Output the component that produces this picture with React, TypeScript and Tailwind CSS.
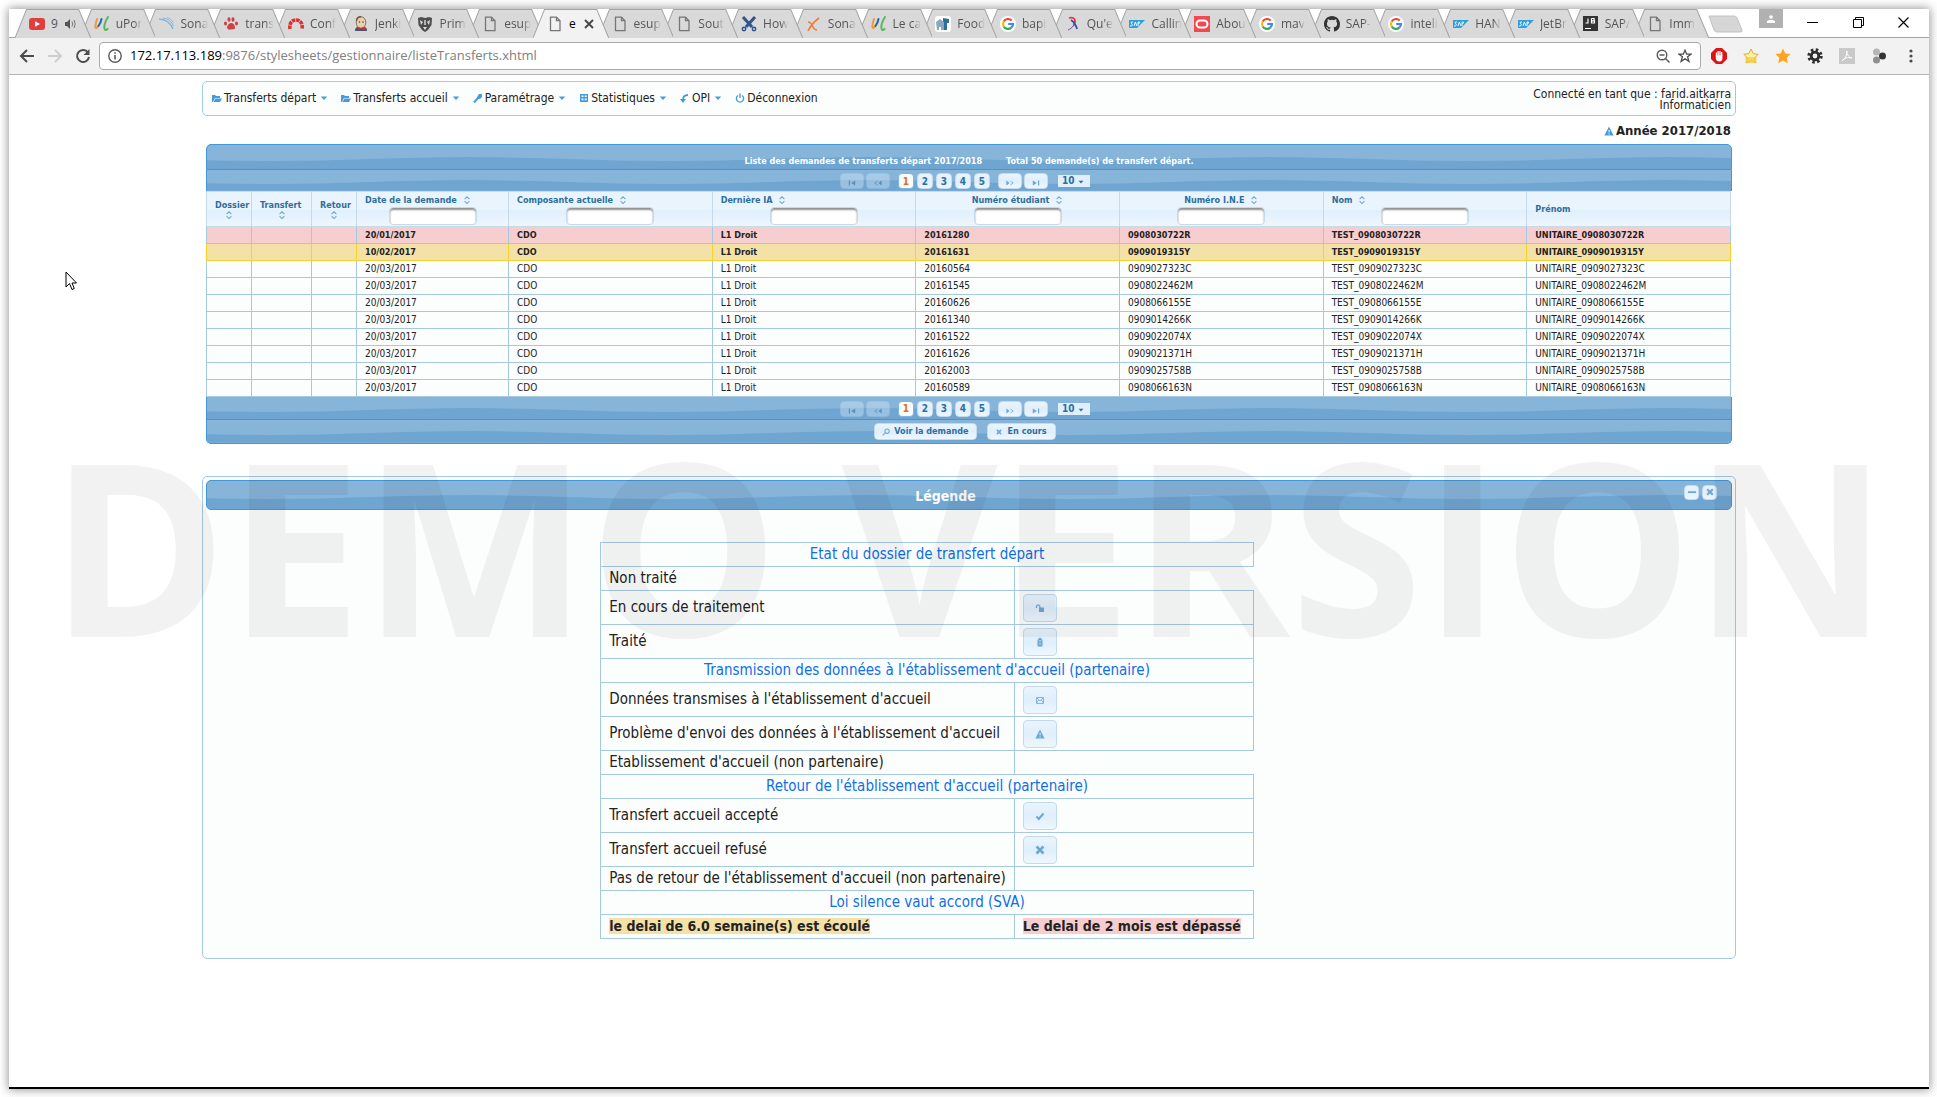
import React, { useId } from 'react';

/* ---------- favicons ---------- */

type FavName =
  | 'youtube' | 'uportal' | 'sonar' | 'paw' | 'arc' | 'jenkins' | 'prime' | 'doc'
  | 'scissors' | 'cross' | 'nautilus' | 'google' | 'parrot' | 'sap' | 'oracle' | 'github' | 'jetbrains';

function Favicon({ name }: { name: FavName }) {
  const box = { viewBox: '0 0 16 16', className: 'size-4 shrink-0', 'aria-hidden': true } as const;
  switch (name) {
    case 'youtube':
      return (
        <svg {...box}><rect y="2" width="16" height="12" rx="3" fill="#e0403d" /><path d="M6 5.2v5.6L11 8z" fill="#fff" /></svg>
      );
    case 'uportal':
      return (
        <svg {...box} fill="none" strokeWidth="2" strokeLinecap="round">
          <path d="M3 3C2 6 1 10 1.500 11.500s2 0 3-2" stroke="#f0983c" />
          <path d="M7.500 3C7 6 6 8 4.500 10" stroke="#2d68a8" />
          <path d="M14 1c-2.500 4-4 9-3.500 11.500s2 1.500 3 .5" stroke="#57b95b" />
        </svg>
      );
    case 'sonar':
      return (
        <svg {...box} fill="none" stroke="#7fb6df">
          <path d="M1 3c6 0 12 4 14 10" strokeWidth="1.400" /><path d="M5 2c5 .5 9 4 10.500 8" /><path d="M9 1.500c3 .8 5.500 3 6.500 5" strokeWidth=".8" />
        </svg>
      );
    case 'paw':
      return (
        <svg {...box} fill="#cf3f45">
          <path d="M8 7c-2 0-4 3-4 4.500S6 14 8 13.500s4 .5 4-2S10 7 8 7z" /><ellipse cx="2.500" cy="7.500" rx="1.500" ry="2" /><ellipse cx="6" cy="3.500" rx="1.500" ry="2.300" /><ellipse cx="10" cy="3.500" rx="1.500" ry="2.300" /><ellipse cx="13.500" cy="7.500" rx="1.500" ry="2" />
        </svg>
      );
    case 'arc':
      return (
        <svg {...box} fill="none"><path d="M2 13C1 7 4 4 8 4s7 3 6 9" stroke="#e0312f" strokeWidth="3.600" strokeDasharray="3.500 .7" /></svg>
      );
    case 'jenkins':
      return (
        <svg {...box}>
          <path d="M2 15c0-3 1-4 3-4h6c2 0 3 1 3 4z" fill="#47556b" /><ellipse cx="8" cy="6.500" rx="4.800" ry="5.800" fill="#eccfae" stroke="#6b5847" strokeWidth=".8" />
          <path d="M3.500 5C3.500 2 5 .8 8 .8" stroke="#6b5847" strokeWidth="1.400" fill="none" /><circle cx="6.500" cy="6" r=".7" fill="#333" /><circle cx="10" cy="6" r=".7" fill="#333" /><path d="M8 12l4-1.500v4zM8 12l-3-1v3z" fill="#c8353a" />
        </svg>
      );
    case 'prime':
      return (
        <svg {...box}>
          <path d="M1 2l3-1 4 1 4-1 3 1-.5 7L11 14l-3 2-3-2-3.500-5z" fill="#4d4d4d" /><path d="M3 4l3 2-2 3zM13 4l-3 2 2 3zM7.300 4h1.400v5H7.300zM6 11h4l-2 3z" fill="#ddd" />
        </svg>
      );
    case 'doc':
      return (
        <svg {...box} fill="none" stroke="#767676" strokeWidth="1.300"><path d="M3.500 1.200h6l3.500 3.500v10H3.500z" /><path d="M9.500 1.200v3.500H13" /></svg>
      );
    case 'scissors':
      return (
        <svg {...box} fill="none" stroke="#31548a" strokeWidth="3"><path d="M2 1l9 10M14 1L5 11" /><circle cx="3" cy="13" r="1.700" strokeWidth="1.500" /><circle cx="13" cy="13" r="1.700" strokeWidth="1.500" /></svg>
      );
    case 'cross':
      return (
        <svg {...box} fill="none" stroke="#ee7b3b" strokeWidth="1.600"><path d="M2 6c3 0 4 3 5 5s2 3 4 3M13 2C9 5 5 9 2 15" /></svg>
      );
    case 'nautilus':
      return (
        <svg {...box}><rect width="16" height="16" rx="3" fill="#fff" /><path d="M8 2l6 1v4h-2v7H8z" fill="#2c6e9b" /><path d="M1 6l4-3 4 3v8H6v-3H4v3H2z" fill="#8aa7bd" /></svg>
      );
    case 'google':
      return (
        <svg {...box}>
          <circle cx="8" cy="8" r="8" fill="#fff" />
          <g fill="none" strokeWidth="2.200"><path d="M11.700 4.600A5 5 0 003.700 5.500" stroke="#e94335" /><path d="M3.700 5.500a5 5 0 000 5" stroke="#fabb05" /><path d="M3.700 10.500a5 5 0 007.600 1.200" stroke="#34a853" /><path d="M11.300 11.700A5 5 0 0013 8H8.200" stroke="#4285f4" /></g>
        </svg>
      );
    case 'parrot':
      return (
        <svg {...box} fill="none" strokeWidth="1.800"><path d="M4 2c3-1 6 0 6 3S8 9 9 10" stroke="#d9383d" /><path d="M6 4c3 2 5 5 6 9" stroke="#3a4ea0" /><path d="M8 10c-1 2-3 3-5 4" stroke="#6b58a0" strokeWidth="1" /></svg>
      );
    case 'sap':
      return (
        <svg {...box}>
          <path d="M0 4h16l-8 8H0z" fill="#2f9fdc" />
          <path d="M4 6H2.500q-.9 1 .3 1.800T2.500 10H1M5 10l1.300-4L8 10M9 10V6h1.500q1 1.200-1.500 2" fill="none" stroke="#fff" strokeWidth=".9" />
        </svg>
      );
    case 'oracle':
      return (
        <svg {...box}><rect width="16" height="16" fill="#ef4a4f" /><rect x="2.500" y="4.500" width="11" height="7" rx="3.500" fill="none" stroke="#fff" strokeWidth="2" /></svg>
      );
    case 'github':
      return (
        <svg {...box}>
          <path fill="#333" d="M8 0C3.580 0 0 3.580 0 8c0 3.540 2.290 6.530 5.470 7.590.4.070.55-.17.55-.38 0-.19-.01-.82-.01-1.490-2.010.37-2.530-.49-2.690-.94-.09-.23-.48-.94-.82-1.130-.28-.15-.68-.52-.01-.53.63-.01 1.080.58 1.230.82.72 1.210 1.870.87 2.330.66.070-.52.28-.87.51-1.070-1.780-.2-3.640-.89-3.640-3.950 0-.87.31-1.590.82-2.150-.08-.2-.36-1.020.08-2.120 0 0 .67-.21 2.200.82a7.600 7.600 0 014 0c1.530-1.040 2.200-.82 2.200-.82.44 1.100.16 1.920.08 2.120.51.56.82 1.270.82 2.150 0 3.070-1.870 3.750-3.650 3.950.29.25.54.73.54 1.480 0 1.070-.01 1.930-.01 2.200 0 .21.15.46.55.38A8.010 8.010 0 0016 8c0-4.420-3.580-8-8-8z" />
        </svg>
      );
    default:
      return (
        <svg {...box}><rect width="15" height="15" fill="#333" /><path d="M2 12.500h6M5 2.500v4.500H2.500M8.500 2.500v4.500h3V4.800h-3M8.500 2.500h2.600v2.300" stroke="#fff" strokeWidth="1.200" fill="none" /></svg>
      );
  }
}

/* ---------- browser chrome ---------- */

const TABS: { icon: FavName; label: string; active?: boolean; audio?: boolean }[] = [
  { icon: 'youtube', label: '9', audio: true },
  { icon: 'uportal', label: 'uPor' },
  { icon: 'sonar', label: 'Sona' },
  { icon: 'paw', label: 'trans' },
  { icon: 'arc', label: 'Conf' },
  { icon: 'jenkins', label: 'Jenki' },
  { icon: 'prime', label: 'Prim' },
  { icon: 'doc', label: 'esup' },
  { icon: 'doc', label: 'e', active: true },
  { icon: 'doc', label: 'esup' },
  { icon: 'doc', label: 'Sout' },
  { icon: 'scissors', label: 'How' },
  { icon: 'cross', label: 'Sona' },
  { icon: 'uportal', label: 'Le ca' },
  { icon: 'nautilus', label: 'Food' },
  { icon: 'google', label: 'bapi' },
  { icon: 'parrot', label: "Qu'e" },
  { icon: 'sap', label: 'Callin' },
  { icon: 'oracle', label: 'Abou' },
  { icon: 'google', label: 'mav' },
  { icon: 'github', label: 'SAP-' },
  { icon: 'google', label: 'inteli' },
  { icon: 'sap', label: 'HAN' },
  { icon: 'sap', label: 'JetBr' },
  { icon: 'jetbrains', label: 'SAP/' },
  { icon: 'doc', label: 'Imm' },
];

function BrowserTab({ tab, index }: { tab: (typeof TABS)[number]; index: number }) {
  return (
    <li className="relative h-full min-w-0 flex-1" style={{ zIndex: tab.active ? 50 : 40 - index }}>
      <svg className="absolute inset-y-0 left-0 h-full w-[calc(100%+11px)]" viewBox="0 0 76 28" preserveAspectRatio="none" aria-hidden="true">
        <path d="M0 28L11.500 .5H64L76 28" fill={tab.active ? '#f2f2f2' : '#d9d9d9'} stroke="#a5a5a5" />
      </svg>
      <button type="button" className="relative flex h-full w-full items-center gap-1.5 pl-3.5 text-left text-xs text-[#555]">
        <Favicon name={tab.icon} />
        <span className={tab.active ? 'text-black' : tab.audio ? '' : 'whitespace-nowrap mask-r-from-70%'}>{tab.label}</span>
        {tab.audio && (
          <svg className="size-3 shrink-0" viewBox="0 0 12 12" aria-hidden="true"><path d="M1 4h2l3-3v10L3 8H1z" fill="#555" /><path d="M8 3.500q1.500 2.500 0 5M10 2q2.500 4 0 8" stroke="#777" fill="none" /></svg>
        )}
        {tab.active && (
          <svg className="ml-0.5 size-2.5 shrink-0" viewBox="0 0 10 10" aria-hidden="true"><path d="M1 1l8 8M9 1L1 9" stroke="#444" strokeWidth="1.800" /></svg>
        )}
      </button>
    </li>
  );
}

function BrowserChrome() {
  return (
    <header className="font-['Open_Sans',sans-serif]">
      <div className="flex h-[29px] items-start border-b border-[#a5a5a5] bg-white">
        <ul className="isolate ml-1.5 flex h-[29px] min-w-0 flex-1">
          {TABS.map((t, i) => <BrowserTab key={i} tab={t} index={i} />)}
        </ul>
        <button type="button" aria-label="Nouvel onglet" className="mt-1.5 ml-2.5">
          <svg className="h-[18px] w-[35px]" viewBox="0 0 35 18" aria-hidden="true"><path d="M1 1h25q2 0 3 2l5 12q1 2-2 2H9q-2 0-3-2z" fill="#d6d6d6" stroke="#c2c2c2" /></svg>
        </button>
        <button type="button" aria-label="Profil" className="ml-4 flex h-[19px] w-6 items-center justify-center bg-[#b1b1b1]">
          <svg className="size-2" viewBox="0 0 8 8" aria-hidden="true"><circle cx="4" cy="2" r="1.800" fill="#fff" /><path d="M0 8V6q4-2.500 8 0v2z" fill="#fff" /></svg>
        </button>
        <div className="flex h-[26px] w-[146px] items-center justify-between pr-5 pl-6">
          <button type="button" aria-label="Réduire"><svg className="size-[11px]" viewBox="0 0 11 11" aria-hidden="true"><path d="M0 5.500h11" stroke="#000" /></svg></button>
          <button type="button" aria-label="Restaurer"><svg className="size-[11px]" viewBox="0 0 11 11" aria-hidden="true"><path d="M.5 2.500h8v8h-8zM2.500 2.500v-2h8v8h-2" stroke="#000" fill="none" /></svg></button>
          <button type="button" aria-label="Fermer"><svg className="size-[11px]" viewBox="0 0 11 11" aria-hidden="true"><path d="M.5 .5l10 10M10.500 .5l-10 10" stroke="#000" strokeWidth="1.200" /></svg></button>
        </div>
      </div>
      <div className="flex h-[37px] items-center border-b border-[#b4b4b4] bg-[#f2f2f2] pl-2.5">
        <button type="button" aria-label="Précédent"><svg className="size-4" viewBox="0 0 16 16" aria-hidden="true"><path d="M15 8H2M8 2L2 8l6 6" fill="none" stroke="#4c4c4c" strokeWidth="2" /></svg></button>
        <button type="button" aria-label="Suivant" className="ml-3"><svg className="size-4" viewBox="0 0 16 16" aria-hidden="true"><path d="M1 8h13M8 2l6 6-6 6" fill="none" stroke="#cfcfcf" strokeWidth="2" /></svg></button>
        <button type="button" aria-label="Actualiser" className="ml-3"><svg className="size-4" viewBox="0 0 16 16" aria-hidden="true"><path d="M13 4.500A6 6 0 1014 9" fill="none" stroke="#4c4c4c" strokeWidth="2" /><path d="M14.500 1v6h-6z" fill="#4c4c4c" /></svg></button>
        <div className="ml-2 flex h-7 flex-1 items-center rounded-sm border border-[#a9a9a9] bg-white pr-2 pl-2">
          <svg className="size-3.5" viewBox="0 0 14 14" aria-hidden="true"><circle cx="7" cy="7" r="6.200" fill="none" stroke="#5a5a5a" strokeWidth="1.400" /><path d="M7 6v4.500M7 3.200v1.600" stroke="#5a5a5a" strokeWidth="1.600" /></svg>
          <p className="ml-2 flex-1 text-[13px] whitespace-nowrap text-[#808080]"><span className="text-black">172.17.113.189</span>:9876/stylesheets/gestionnaire/listeTransferts.xhtml</p>
          <button type="button" aria-label="Zoom"><svg className="size-3.5" viewBox="0 0 14 14" aria-hidden="true"><circle cx="6" cy="6" r="4.800" fill="none" stroke="#5a5a5a" strokeWidth="1.400" /><path d="M3.500 6h5M9.500 9.500l4 4" stroke="#5a5a5a" strokeWidth="1.500" /></svg></button>
          <button type="button" aria-label="Favori" className="ml-2"><svg className="size-3.5" viewBox="0 0 14 14" aria-hidden="true"><path d="M7 1.200l1.700 4h4.300L9.600 7.800l1.300 4.600L7 9.700l-3.900 2.700 1.300-4.600L1 5.200h4.300z" fill="none" stroke="#4c4c4c" strokeWidth="1.300" /></svg></button>
        </div>
        <div className="flex items-center gap-4 pr-2.5 pl-2.5">
          <button type="button" aria-label="Bloqueur de publicités"><svg className="size-4" viewBox="0 0 16 16" aria-hidden="true"><path d="M5 0h6l5 5v6l-5 5H5l-5-5V5z" fill="#dd1414" /><path d="M5.500 8V4.500M7.200 8V3M9 8V3M10.700 8V4" stroke="#fff" strokeWidth="1.300" /><path d="M4.800 7.500h6.600v3q0 3-3 3T4.800 11z" fill="#fff" /></svg></button>
          <button type="button" aria-label="Marque-pages"><svg className="size-4" viewBox="0 0 16 16" aria-hidden="true"><path d="M8 1l2.200 4.600 5 .7-3.600 3.500.9 5.200L8 12.500 3.500 15l.9-5.200L.8 6.300l5-.7z" fill="#fff3a0" stroke="#e0aa34" /><path d="M2.500 9h11v6h-11z" fill="#f6c93a" opacity=".7" /></svg></button>
          <button type="button" aria-label="Favoris"><svg className="size-4" viewBox="0 0 16 16" aria-hidden="true"><path d="M8 .5l2.300 5 5.200.6-3.800 3.700 1 5.500L8 12.600l-4.700 2.700 1-5.500L.5 6.100l5.200-.6z" fill="#ffa41f" /></svg></button>
          <button type="button" aria-label="Options"><svg className="size-4" viewBox="0 0 16 16" aria-hidden="true"><circle cx="8" cy="8" r="6" fill="none" stroke="#2e2e2e" strokeWidth="3.400" strokeDasharray="2.400 2.312" /><circle cx="8" cy="8" r="3.800" fill="none" stroke="#2e2e2e" strokeWidth="2.800" /></svg></button>
          <button type="button" aria-label="PDF"><svg className="size-4" viewBox="0 0 16 16" aria-hidden="true"><path d="M0 0h16v16H0z" fill="#c9c9c9" /><path d="M8 3c-1 2 1 6 5 7-4-1-8 0-10 3 3-2 5-6 5-10z" fill="none" stroke="#fff" /></svg></button>
          <button type="button" aria-label="Extension"><svg className="size-4" viewBox="0 0 16 16" aria-hidden="true"><circle cx="5.500" cy="4" r="3.500" fill="#b5b5b5" /><circle cx="5.500" cy="12" r="3.500" fill="#8f8f8f" /><circle cx="11.500" cy="8" r="3.500" fill="#333" /></svg></button>
          <button type="button" aria-label="Menu"><svg className="size-4" viewBox="0 0 16 16" fill="#4c4c4c" aria-hidden="true"><circle cx="8" cy="3" r="1.600" /><circle cx="8" cy="8" r="1.600" /><circle cx="8" cy="13" r="1.600" /></svg></button>
        </div>
      </div>
    </header>
  );
}

/* ---------- small interface glyphs ---------- */

type GlyphName =
  | 'folder' | 'wrench' | 'grid' | 'arrow' | 'power' | 'alert' | 'unlock' | 'lock' | 'mail' | 'check' | 'close' | 'search'
  | 'first' | 'prev' | 'next' | 'last' | 'minus' | 'sort' | 'caret';

const GLYPHS: Record<GlyphName, React.ReactNode> = {
  folder: <><path d="M0 2h3l1 1h4v2H3L1 9H0z" /><path d="M3.500 5.500H10L8 9H1.500z" /></>,
  wrench: <><path d="M4 4l2-3h3v3L7 6H4z" /><path d="M1 9.500L5 5" strokeWidth="2" stroke="currentColor" /></>,
  grid: <path fillRule="evenodd" d="M1 1h8v8H1zm1.500 1.500v1.500h2V2.500zm3.200 0v1.500h2V2.500zM2.500 5.600v1.600h2V5.600zm3.200 0v1.600h2V5.600z" />,
  arrow: <><path d="M0 6h6L3 10z" /><path d="M3 7q0-5 5-5" fill="none" stroke="currentColor" strokeWidth="1.800" /></>,
  power: <path d="M3 2.500a3.600 3.600 0 104 0M5 .5v4.500" fill="none" stroke="currentColor" strokeWidth="1.400" />,
  alert: <path fillRule="evenodd" d="M5 .5l4.600 9H.4zM4.500 4l.2 2.600h.8L5.700 4zm0 3.500v1h1.100v-1z" />,
  unlock: <><path d="M4 4.500h5V9H4z" /><path d="M1.500 5V3.200q1.600-2.600 3.300 0V5" fill="none" stroke="currentColor" strokeWidth="1.300" /></>,
  lock: <path fillRule="evenodd" d="M2.500 4.500V3q2.500-4.500 5 0v6.500h-5zm2.100 1.300v1.700h.8V5.800zM4.200 3.500v.8h1.600v-.8q-.8-1.200-1.600 0z" />,
  mail: <path d="M1.500 2.500h7v6h-7zM1.500 2.500L5 6l3.500-3.500M1.500 8L3.500 5M8.500 8L6.500 5" fill="none" stroke="currentColor" strokeWidth=".8" />,
  check: <path d="M1.500 5.500l2.300 2.500L8.500 2.500" fill="none" stroke="currentColor" strokeWidth="2" />,
  close: <path d="M1.500 1.500l7 7M8.500 1.500l-7 7" fill="none" stroke="currentColor" strokeWidth="2.600" />,
  search: <path d="M9 4a2.700 2.700 0 11-5.400 0A2.700 2.700 0 019 4zM4 6L.8 9.200" fill="none" stroke="currentColor" strokeWidth="1.300" />,
  first: <><path d="M1 2h1.500v6H1zM9 2v6L4 5z" /></>,
  prev: <><path d="M9.500 2v6L5.500 5z" /><path d="M4.500 2.500L1 5l3.500 2.500" fill="none" stroke="currentColor" /></>,
  next: <><path d="M.5 2v6l4-3z" /><path d="M5.500 2.500L9 5 5.500 7.500" fill="none" stroke="currentColor" /></>,
  last: <><path d="M9 2H7.500v6H9zM1 2v6l5-3z" /></>,
  minus: <path d="M0 4h10v2.200H0z" />,
  sort: <path d="M2 4l3-3 3 3M2 6.500l3 3 3-3" fill="none" stroke="currentColor" strokeWidth="1.300" />,
  caret: <path d="M1 3h8L5 7.500z" />,
};

function Glyph({ name, className }: { name: GlyphName; className: string }) {
  return <svg viewBox="0 0 10 10" fill="currentColor" className={`shrink-0 ${className}`} aria-hidden="true">{GLYPHS[name]}</svg>;
}

function Waves() {
  const id = useId();
  return (
    <svg className="absolute inset-x-0 top-[45%] h-[55%] w-full" aria-hidden="true">
      <defs>
        <pattern id={id} x="-138" y="0" width="400" height="40" patternUnits="userSpaceOnUse">
          <path d="M0 1C70 1 130 5 200 5S330 1 400 1V40H0z" fill="#6fa5d1" />
        </pattern>
      </defs>
      <rect width="100%" height="100%" fill={`url(#${id})`} />
    </svg>
  );
}

const PAGE_BTN = 'flex items-center justify-center rounded border border-[#c5dbec] bg-linear-to-b from-[#eaf4fd] via-[#dfeffc] to-[#eef6fe] font-bold text-[#2e6e9e]';

/* ---------- page pieces ---------- */

const MENU: { icon: GlyphName; label: string; sub?: boolean }[] = [
  { icon: 'folder', label: 'Transferts départ', sub: true },
  { icon: 'folder', label: 'Transferts accueil', sub: true },
  { icon: 'wrench', label: 'Paramétrage', sub: true },
  { icon: 'grid', label: 'Statistiques', sub: true },
  { icon: 'arrow', label: 'OPI', sub: true },
  { icon: 'power', label: 'Déconnexion' },
];

function MenuBar() {
  return (
    <div className="flex h-[35px] items-center justify-between rounded-[5px] border border-[#a6c9e2] bg-[#fcfdfd] pr-1 pl-[9px] text-xs">
      <nav className="flex gap-[13px] pb-px">
        {MENU.map((m) => (
          <a key={m.label} href="#" className="flex items-center">
            <Glyph name={m.icon} className="mr-0.5 size-2.5 text-[#469bdd]" />
            {m.label}
            {m.sub && <Glyph name="caret" className="ml-1 size-2 text-[#469bdd]" />}
          </a>
        ))}
      </nav>
      <p className="pt-0.5 text-right leading-[11px]">Connecté en tant que : farid.aitkarra<br />Informaticien</p>
    </div>
  );
}

function Paginator() {
  return (
    <div className="relative flex h-full items-center justify-center pr-2 text-[10px]">
      <div className="flex gap-0.5 opacity-35">
        <button type="button" disabled aria-label="Première page" className={`${PAGE_BTN} h-4 w-6 pt-1`}><Glyph name="first" className="size-2" /></button>
        <button type="button" disabled aria-label="Page précédente" className={`${PAGE_BTN} h-4 w-6 pt-1`}><Glyph name="prev" className="size-2" /></button>
      </div>
      <div className="mx-2 flex gap-[3px]">
        {[1, 2, 3, 4, 5].map((n) =>
          n === 1
            ? <button key={n} type="button" className="flex size-4 items-center justify-center rounded border border-[#79b7e7] bg-[#fafcfc] font-bold text-[#e17009]">{n}</button>
            : <button key={n} type="button" className={`${PAGE_BTN} size-4`}>{n}</button>,
        )}
      </div>
      <div className="flex gap-0.5">
        <button type="button" aria-label="Page suivante" className={`${PAGE_BTN} h-4 w-6 pt-1`}><Glyph name="next" className="size-2 text-[#6da8d5]" /></button>
        <button type="button" aria-label="Dernière page" className={`${PAGE_BTN} h-4 w-6 pt-1`}><Glyph name="last" className="size-2 text-[#6da8d5]" /></button>
      </div>
      <div className="relative ml-2.5">
        <select aria-label="Lignes par page" defaultValue="10" className="block h-3 w-8 appearance-none bg-[#dfeffc] pl-1 leading-3 font-bold text-[#2e6e9e]">
          <option>10</option>
          <option>20</option>
        </select>
        <Glyph name="caret" className="pointer-events-none absolute top-1 right-1.5 size-1.5 text-[#2e6e9e]" />
      </div>
    </div>
  );
}

const COLUMNS: { label: string; width: string; kind: 'stack' | 'filter' | 'plain'; centered?: boolean }[] = [
  { label: 'Dossier', width: 'w-[45px]', kind: 'stack' },
  { label: 'Transfert', width: 'w-[60px]', kind: 'stack' },
  { label: 'Retour', width: 'w-[45px]', kind: 'stack' },
  { label: 'Date de la demande', width: 'w-[152px]', kind: 'filter' },
  { label: 'Composante actuelle', width: '', kind: 'filter' },
  { label: 'Dernière IA', width: '', kind: 'filter' },
  { label: 'Numéro étudiant', width: '', kind: 'filter', centered: true },
  { label: 'Numéro I.N.E', width: '', kind: 'filter', centered: true },
  { label: 'Nom', width: '', kind: 'filter' },
  { label: 'Prénom', width: '', kind: 'plain' },
];

const ROWS: [string, string, string][] = [
  ['20/01/2017', '20161280', '0908030722R'],
  ['10/02/2017', '20161631', '0909019315Y'],
  ['20/03/2017', '20160564', '0909027323C'],
  ['20/03/2017', '20161545', '0908022462M'],
  ['20/03/2017', '20160626', '0908066155E'],
  ['20/03/2017', '20161340', '0909014266K'],
  ['20/03/2017', '20161522', '0909022074X'],
  ['20/03/2017', '20161626', '0909021371H'],
  ['20/03/2017', '20162003', '0909025758B'],
  ['20/03/2017', '20160589', '0908066163N'],
];

function HeadCell({ col }: { col: (typeof COLUMNS)[number] }) {
  const base = `${col.width} h-[35px] border border-[#c5dbec] p-0 text-left leading-3 font-bold`;
  if (col.kind === 'stack') {
    return (
      <th scope="col" className={`${base} pl-2`}>
        <div className="flex w-full flex-col whitespace-nowrap">{col.label}<Glyph name="sort" className="mr-2 size-2 self-center text-[#6da8d5]" /></div>
      </th>
    );
  }
  if (col.kind === 'plain') return <th scope="col" className={`${base} px-2`}>{col.label}</th>;
  return (
    <th scope="col" className={`${base} px-2`}>
      <div className={col.centered ? 'flex items-center justify-center gap-1.5' : 'flex items-center gap-1.5'}>
        {col.label}<Glyph name="sort" className="size-2 text-[#6da8d5]" />
      </div>
      <input type="text" aria-label={`Filtrer par ${col.label}`} className="mx-auto mt-px block h-[18px] w-22 rounded border border-[#c5dbec] bg-white px-1 shadow-[inset_0_2px_2px_#8f8f8f]" />
    </th>
  );
}

function DataTable() {
  return (
    <section className="mx-1">
      <div className="relative h-[26px] rounded-t-[5px] overflow-hidden border border-[#4297d7] bg-[#87b5da]">
        <Waves />
        <h2 className="relative flex justify-center gap-6 pt-2.5 text-[9px] leading-3 font-bold text-white">
          <span>Liste des demandes de transferts départ 2017/2018</span>
          <span>Total 50 demande(s) de transfert départ.</span>
        </h2>
      </div>
      <div className="relative h-[21px] border-x border-[#4297d7] bg-[#87b5da] pt-px"><Waves /><Paginator /></div>
      <div className="pr-px">
      <table className="w-full table-fixed border-collapse text-[10px]">
        <thead className="bg-linear-to-b from-[#eaf4fd] from-50% via-[#dfeffc] via-50% to-[#eff7fe] text-[9px] text-[#2e6e9e]">
          <tr>{COLUMNS.map((c) => <HeadCell key={c.label} col={c} />)}</tr>
        </thead>
        <tbody>
          {ROWS.map(([date, student, ine], i) => {
            const tone = i === 0
              ? 'border-[#a6c9e2] bg-[#f6cecf] font-bold'
              : i === 1 ? 'border-[#f5d22e] bg-[#f4e1a8] font-bold' : 'border-[#a6c9e2] bg-[#fcfdfd]';
            return (
              <tr key={ine}>
                {['', '', '', date, 'CDO', 'L1 Droit', student, ine, `TEST_${ine}`, `UNITAIRE_${ine}`].map((v, j) => (
                  <td key={j} className={`h-[17px] border px-2 py-0 leading-4 ${i < 2 ? 'text-[9px]' : ''} ${tone}`}>{v}</td>
                ))}
              </tr>
            );
          })}
        </tbody>
      </table>
      </div>
      <div className="relative h-[23px] border-x border-b border-[#4297d7] bg-[#87b5da] pt-px"><Waves /><Paginator /></div>
      <div className="relative h-6 overflow-hidden rounded-b-[5px] border border-t-0 border-[#4297d7] bg-[#87b5da]">
        <Waves />
        <div className="relative flex h-full items-center justify-center gap-2.5 pr-2 text-[9px]">
          <button type="button" className={`${PAGE_BTN} h-[17px] gap-1 px-[7px]`}><Glyph name="search" className="size-2 text-[#6da8d5]" />Voir la demande</button>
          <button type="button" className={`${PAGE_BTN} h-[17px] gap-1.5 px-2`}><Glyph name="close" className="size-1.5 text-[#6da8d5]" />En cours</button>
        </div>
      </div>
    </section>
  );
}

const LEGEND: ({ title: string } | { label: string; icon?: GlyphName })[] = [
  { title: 'Etat du dossier de transfert départ' },
  { label: 'Non traité' },
  { label: 'En cours de traitement', icon: 'unlock' },
  { label: 'Traité', icon: 'lock' },
  { title: "Transmission des données à l'établissement d'accueil (partenaire)" },
  { label: "Données transmises à l'établissement d'accueil", icon: 'mail' },
  { label: "Problème d'envoi des données à l'établissement d'accueil", icon: 'alert' },
  { label: "Etablissement d'accueil (non partenaire)" },
  { title: "Retour de l'établissement d'accueil (partenaire)" },
  { label: 'Transfert accueil accepté', icon: 'check' },
  { label: 'Transfert accueil refusé', icon: 'close' },
  { label: "Pas de retour de l'établissement d'accueil (non partenaire)" },
  { title: 'Loi silence vaut accord (SVA)' },
];

function Legend() {
  const cell = 'border-[#a6c9e2] px-2 py-0 leading-[23px]';
  return (
    <section className="mt-8 rounded-[5px] border border-[#a6c9e2] bg-[#fcfdfd] p-[3px] pb-[19px]">
      <div className="relative flex h-[30px] items-center justify-end overflow-hidden rounded-[5px] border border-[#4297d7] bg-[#87b5da]">
        <Waves />
        <h2 className="relative flex-1 pt-0.5 text-center text-sm font-bold text-white">Légende</h2>
        <div className="relative mr-3.5 mb-1.5 flex gap-[3px]">
          <button type="button" aria-label="Réduire le panneau" className={`${PAGE_BTN} size-[15px]`}><Glyph name="minus" className="size-2 text-[#6da8d5]" /></button>
          <button type="button" aria-label="Fermer le panneau" className={`${PAGE_BTN} size-[15px]`}><Glyph name="close" className="size-2 text-[#6da8d5]" /></button>
        </div>
      </div>
      <div className="mt-8 flex justify-center pr-[84px]">
        <table className="border-collapse text-[15px]">
          <colgroup><col className="w-[413px]" /><col className="w-[239px]" /></colgroup>
          <tbody>
            {LEGEND.map((r) =>
              'title' in r ? (
                <tr key={r.title}><th colSpan={2} scope="colgroup" className={`${cell} h-6 border text-center font-normal text-[#0f6fe8]`}>{r.title}</th></tr>
              ) : (
                <tr key={r.label}>
                  <td className={`${cell} border whitespace-nowrap`}>{r.label}</td>
                  {r.icon ? (
                    <td className={`${cell} h-[34px] border`}>
                      <button type="button" aria-label={r.label} className={`${PAGE_BTN} h-7 w-[34px]`}><Glyph name={r.icon} className="size-2.5 text-[#6da8d5]" /></button>
                    </td>
                  ) : (
                    <td className={`${cell} h-6 border-y border-l`} />
                  )}
                </tr>
              ),
            )}
            <tr className="text-sm font-bold">
              <td className={`${cell} h-6 border`}><span className="bg-[#f4e1a8]">le delai de 6.0 semaine(s) est écoulé</span></td>
              <td className={`${cell} h-6 border`}><span className="bg-[#f6cecf]">Le delai de 2 mois est dépassé</span></td>
            </tr>
          </tbody>
        </table>
      </div>
    </section>
  );
}

export default function App() {
  return (
    <div className="flex min-h-screen flex-col bg-white pt-[9px] pr-2 pb-2 pl-[9px]">
      <div className="flex flex-1 flex-col border-b-2 border-black bg-white shadow-[0_0_9px_1px_#00000066]">
        <BrowserChrome />
        <div className="relative flex-1 overflow-hidden font-['DejaVu_Sans_Condensed','DejaVu_Sans',sans-serif] text-[#222]">
          <main className="mx-auto w-4/5 px-px pt-1.5">
            <MenuBar />
            <p className="flex h-7 items-center justify-end pt-px pr-[5px] text-[13px] font-bold"><Glyph name="alert" className="mr-0.5 size-2.5 text-[#469bdd]" />Année 2017/2018</p>
            <DataTable />
            <Legend />
          </main>
          <p className="pointer-events-none absolute inset-x-0 top-[349px] text-center font-['Open_Sans',sans-serif] text-[240px] leading-[240px] font-bold whitespace-nowrap text-black/5">DEMO VERSION</p>
          <svg className="absolute top-[196px] left-14 h-5 w-3" viewBox="0 0 12 20" aria-hidden="true"><path d="M1 1v15l3.500-3.500L7 18.500l2.300-1L7 12h4.500z" fill="#fff" stroke="#000" /></svg>
        </div>
      </div>
    </div>
  );
}
